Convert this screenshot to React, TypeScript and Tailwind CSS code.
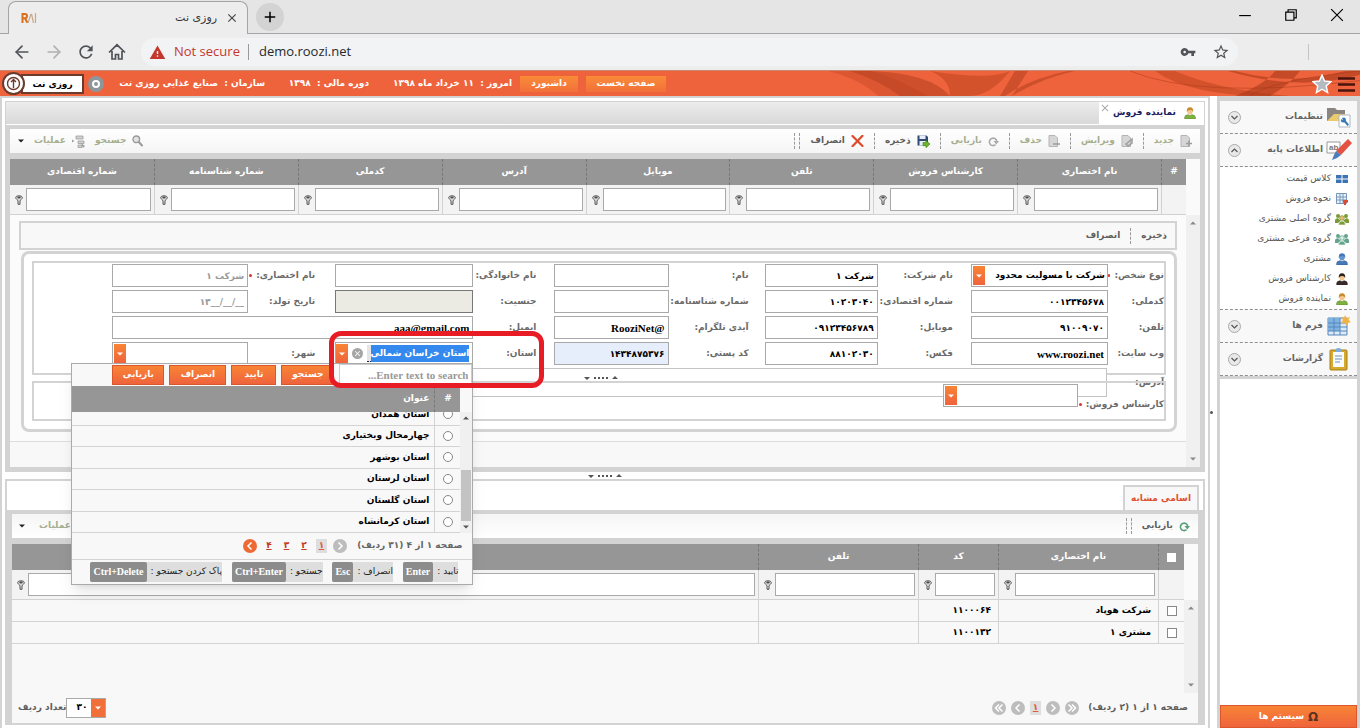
import type { ReactNode } from "react"
import clsx from "clsx"
import { LuArrowLeft, LuArrowRight } from "react-icons/lu"
import { MdRefresh, MdVpnKey, MdStarBorder, MdWarning, MdClose, MdAdd } from "react-icons/md"

const gridColumns = ["نام اختصاری", "کارشناس فروش", "تلفن", "موبایل", "آدرس", "کدملی", "شماره شناسنامه", "شماره اقتصادی"]

const provinces = ["استان همدان", "چهارمحال وبختیاری", "استان بوشهر", "استان لرستان", "استان گلستان", "استان کرمانشاه"]

const similarRows = [
  { name: "شرکت هوپاد", code: "۱۱۰۰۰۶۴" },
  { name: "مشتری ۱", code: "۱۱۰۰۱۳۲" },
]

const shortcuts = [
  { label: "تایید :", keys: "Enter" },
  { label: "انصراف :", keys: "Esc" },
  { label: "جستجو :", keys: "Ctrl+Enter" },
  { label: "پاک کردن جستجو :", keys: "Ctrl+Delete" },
]

/* ---------- small icons ---------- */

function Person({ hair = "#c98b2b", face = "#f3c88f", coat = "#7fb23c", size = 12 }: { hair?: string; face?: string; coat?: string; size?: number }) {
  return (
    <svg width={size} height={size} viewBox="0 0 12 12" className="shrink-0">
      <path d="M.5 12V10.500Q.5 8 4 7.500L6 8.500L8 7.500Q11.500 8 11.500 10.500V12Z" fill={coat} stroke="#00000055" strokeWidth=".5" />
      <ellipse cx="6" cy="4.300" rx="2.700" ry="3.200" fill={face} />
      <path d="M2.800 5Q2.300 .2 6 .2T9.200 5Q8.500 2.800 6 2.900T2.800 5Z" fill={hair} />
    </svg>
  )
}

function Group({ color, face }: { color: string; face: string }) {
  return (
    <svg width="14" height="12" viewBox="0 0 14 12" className="shrink-0">
      <circle cx="3" cy="3" r="2" fill={color} />
      <circle cx="11" cy="3" r="2" fill={color} />
      <path d="M0 8Q0 5 3 5.200L6 8L3 10H0ZM14 8Q14 5 11 5.200L8 8L11 10H14Z" fill={color} />
      <circle cx="7" cy="5" r="2.300" fill={face} stroke={color} strokeWidth=".8" />
      <path d="M3.500 12Q3.500 8 7 8T10.500 12Z" fill={color} stroke="#fff" strokeWidth=".6" />
    </svg>
  )
}

function PageIcon({ mark }: { mark: string }) {
  return (
    <svg width="12" height="12" viewBox="0 0 12 12" className="shrink-0">
      <path d="M1 .5H7L9.500 3V11.500H1Z" fill="#d6d6d6" stroke="#b5b5b5" />
      <path d={mark} fill="none" stroke="#9d9d9d" strokeWidth="1.500" />
    </svg>
  )
}

function ReloadIcon({ color }: { color: string }) {
  return (
    <svg width="11" height="11" viewBox="0 0 11 11" className="shrink-0">
      <path d="M7.500 8.700A3.700 3.700 0 1 1 8.700 5" fill="none" stroke={color} strokeWidth="1.600" />
      <path d="M5.500 5H11L8.300 8.500Z" fill={color} />
    </svg>
  )
}

function SaveIcon() {
  return (
    <svg width="13" height="13" viewBox="0 0 13 13" className="shrink-0">
      <path d="M.5 .5H9.500L11 2V10.500H.5Z" fill="#2f4a75" />
      <path d="M2.500 .5H8.500V4H2.500ZM2.500 6H9V10.500H2.500Z" fill="#e8eef7" />
      <path d="M6 7.500H9V5.500L13 9L9 12.800V10.700H6Z" fill="#6fb52c" stroke="#3d7a12" strokeWidth=".6" />
    </svg>
  )
}

function CancelIcon() {
  return (
    <svg width="13" height="12" viewBox="0 0 13 12" className="shrink-0">
      <path d="M1.500 1L11.500 11M11.500 .8L1.500 11.200" stroke="#dd4a2c" strokeWidth="2.200" strokeLinecap="round" />
    </svg>
  )
}

function SearchIcon() {
  return (
    <svg width="11" height="12" viewBox="0 0 11 12" className="shrink-0">
      <circle cx="4.300" cy="4.300" r="3.300" fill="#e2e2e2" stroke="#9a9a9a" strokeWidth="1.400" />
      <path d="M6.800 7L10 10.500" stroke="#9a9a9a" strokeWidth="2" strokeLinecap="round" />
    </svg>
  )
}

function ActionsIcon() {
  return (
    <svg width="13" height="13" viewBox="0 0 13 13" className="shrink-0">
      <path d="M4 1H11V4H4ZM6 6H12V8.500H6ZM6 10H10V12.500H6Z" fill="#d0d0d0" stroke="#a0a0a0" strokeWidth=".8" />
      <path d="M0 4.500L2.500 6L0 7.500ZM9 8L13 11L11 13Z" fill="#a0a0a0" />
    </svg>
  )
}

function FilterIcon() {
  return (
    <svg width="8" height="10" viewBox="0 0 8 10" className="shrink-0">
      <path d="M.7 2.600C.7 .2 7.300 .2 7.300 2.600C7.300 4.200 5 5 5 6V9.300H3V6C3 5 .7 4.200 .7 2.600Z" fill="#d9d9d9" stroke="#4a4a4a" strokeWidth=".9" />
      <ellipse cx="4" cy="2.500" rx="1.700" ry=".9" fill="#4a4a4a" />
    </svg>
  )
}

function Caret({ className }: { className?: string }) {
  return (
    <svg width="6" height="4" viewBox="0 0 6 4" className={className}>
      <path d="M0 .5H6L3 3.500Z" fill="currentColor" />
    </svg>
  )
}

function Grip() {
  return (
    <svg width="34" height="4" viewBox="0 0 34 4" className="text-[#555]">
      <path d="M0 1H6L3 4ZM28 3H34L31 0Z" fill="currentColor" />
      <path d="M10 2H24" stroke="currentColor" strokeWidth="2" strokeDasharray="2 2" />
    </svg>
  )
}

function Round({ d, orange, label }: { d: string; orange?: boolean; label: string }) {
  return (
    <button type="button" aria-label={label} className={clsx("flex size-[14px] items-center justify-center rounded-full", orange ? "bg-[#ee6a35]" : "bg-[#bdbdbd]")}>
      <svg width="10" height="10" viewBox="0 0 10 10">
        <path d={d} fill="none" stroke="#fff" strokeWidth="1.500" />
      </svg>
    </button>
  )
}

/* ---------- browser chrome ---------- */

function BrowserBar() {
  return (
    <header dir="ltr">
      <div className="flex h-[34px] items-end border-b border-[#a3a3a8] bg-[#e5e5e5]">
        <div className="relative ml-2 flex h-[33px] w-60 translate-y-px items-center rounded-t-lg border border-b-0 border-[#a3a3a8] bg-[#ededed] pr-2 pl-3 font-['DejaVu_Sans',sans-serif]">
          <svg width="16" height="10" viewBox="0 0 16 10">
            <path d="M1.500 10V1H4Q6 1 6 3T4 5.300H1.500M4 5.300L6.500 10" fill="none" stroke="#d9701e" strokeWidth="2" />
            <path d="M7 10L10 1M10.500 1L12.500 10M14.500 0V10" fill="none" stroke="#c9a88a" strokeWidth="1.200" />
          </svg>
          <span dir="rtl" className="flex-1 pr-2 text-[11px] text-[#333]">روزی نت</span>
          <button type="button" aria-label="Close tab"><MdClose size={14} className="text-[#444]" /></button>
        </div>
        <button type="button" aria-label="New tab" className="ml-2 flex size-7 items-center justify-center self-center rounded-full bg-[#d3d3d3]">
          <MdAdd size={18} />
        </button>
        <div className="mb-1 ml-auto flex items-center gap-8 self-center pr-4">
          <svg width="14" height="14" viewBox="0 0 12 12"><path d="M1 6.500H11" stroke="#000" /></svg>
          <svg width="14" height="14" viewBox="0 0 12 12" fill="none" stroke="#000"><path d="M1.500 3.500H8.500V10.500H1.500ZM3.500 3V1.500H10.500V8.500H9" /></svg>
          <svg width="14" height="14" viewBox="0 0 12 12"><path d="M1 1L11 11M11 1L1 11" stroke="#000" /></svg>
        </div>
      </div>
      <div className="flex h-9 items-center bg-[#ededed] pl-3 text-[#505357]">
        <div className="flex w-[129px] items-center gap-3">
          <LuArrowLeft size={20} />
          <LuArrowRight size={20} className="text-[#b0b0b0]" />
          <MdRefresh size={20} />
          <svg width="18" height="18" viewBox="0 0 18 18" fill="none" stroke="currentColor" strokeWidth="1.700"><path d="M1 9.500L9 1.800L17 9.500M4 8V16H7.500V11.500H10.500V16H14V8" /></svg>
        </div>
        <div className="flex h-7 flex-1 items-center rounded-full bg-[#f1f3f5] pr-2 pl-2 font-['Open_Sans',sans-serif] text-[13px]">
          <MdWarning size={17} className="text-[#c5372c]" />
          <span className="mr-2 ml-2 text-[#c5372c]">Not secure</span>
          <span className="mr-2.5 h-4 w-px bg-[#9a9a9a]" />
          <span className="text-[#26282c]">demo.roozi.net</span>
          <MdVpnKey size={16} className="mr-4 ml-auto" />
          <MdStarBorder size={18} />
        </div>
        <div className="mr-[51px] ml-[70px] h-4 w-px bg-[#c4c4c4]" />
      </div>
    </header>
  )
}

function TopBar() {
  return (
    <div dir="ltr" className="relative flex h-[26px] items-center border-t border-[#c98872] bg-[#ef633c] text-[9px] font-bold text-white">
      <svg className="absolute top-0 right-0 h-full w-[560px]" viewBox="0 0 560 26" preserveAspectRatio="none">
        <path d="M28 0Q60 8 78 26H128Q90 4 70 0Z" fill="#c94a27" opacity=".5" />
        <path d="M70 0Q130 2 150 26H100Q80 10 50 0ZM215 0H228L212 26H200ZM268 0Q230 8 205 26H212Q240 8 275 0Z" fill="#b8431f" opacity=".6" />
        <path d="M130 0Q190 10 210 0Q190 26 170 26H150Q150 8 130 0ZM355 0Q390 26 470 26H490Q420 20 375 0Z" fill="#c04722" opacity=".6" />
        <path d="M435 0Q490 16 545 0H560V4Q500 22 428 0ZM475 0Q465 14 435 26H470Q490 14 500 0Z" fill="#a83a1a" opacity=".6" />
        <path d="M330 0Q400 30 560 10M450 26Q470 10 560 0" fill="none" stroke="#a83a1a" opacity=".5" />
      </svg>
      <span className="z-10 ml-0.5 flex size-[23px] shrink-0 items-center justify-center rounded-full border-2 border-[#6b3b2d] bg-white">
        <svg width="15" height="15" viewBox="0 0 15 15" fill="none" stroke="#6b3b2d" strokeWidth="1.400"><circle cx="7.500" cy="7.500" r="6" /><path d="M7.500 12V4.500M5 6L7.500 3.500L10 6" /></svg>
      </span>
      <input aria-label="سیستم" dir="rtl" readOnly value="روزی نت" className="-ml-1 h-5 w-[63px] border-2 border-[#6b3b2d] bg-white text-center text-black" />
      <span className="mr-6 ml-1 flex size-4 shrink-0 items-center justify-center rounded-full bg-[#8d969b]"><span className="size-2 rounded-full border-2 border-white" /></span>
      <span dir="rtl" className="mr-6 w-[137px] whitespace-nowrap">سازمان :&nbsp; صنایع غذایی روزی نت</span>
      <span dir="rtl" className="mr-6 w-20 whitespace-nowrap">دوره مالی :&nbsp; ۱۳۹۸</span>
      <span dir="rtl" className="mr-2 w-[119px] whitespace-nowrap">امروز :&nbsp; ۱۱ خرداد ماه ۱۳۹۸</span>
      <button type="button" className="mr-2 h-4 w-[58px] bg-linear-to-b from-[#f98b38] to-[#f2703a]">داشبورد</button>
      <button type="button" className="h-4 w-20 bg-linear-to-b from-[#f98b38] to-[#f2703a]">صفحه نخست</button>
      <svg width="20" height="20" viewBox="0 0 20 20" className="z-10 ml-auto"><path d="M10 1L12.600 7L19 7.600L14.200 12L15.600 18.500L10 15.200L4.400 18.500L5.800 12L1 7.600L7.400 7Z" fill="#b3bbc0" stroke="#fff" strokeWidth="1.400" /></svg>
      <svg width="17" height="16" viewBox="0 0 17 16" className="z-10 mr-[5px] ml-1.5"><path d="M0 2.500H17M0 8.500H17M0 14.500H17" stroke="#4a130b" strokeWidth="2.400" /></svg>
    </div>
  )
}

/* ---------- sidebar ---------- */

function SideHeader({ label, open, children }: { label: string; open?: boolean; children: ReactNode }) {
  return (
    <button type="button" className="flex h-[33px] w-full items-center border-b border-dashed border-[#8f8f8f] bg-[#f8f8f8] pr-1.5 pl-2 text-[9px] font-bold text-[#666]">
      <span className="flex w-6 justify-center">{children}</span>
      <span className="mr-1 flex-1 text-right">{label}</span>
      <span className="flex size-[13px] items-center justify-center rounded-full border border-[#aaa] bg-[#e9e9e9]">
        <svg width="7" height="5" viewBox="0 0 7 5" className={clsx(open && "rotate-180")}><path d="M.5 1L3.500 4L6.500 1" fill="none" stroke="#555" strokeWidth="1.200" /></svg>
      </span>
    </button>
  )
}

const menuItems = [
  { label: "کلاس قیمت", icon: <svg width="12" height="10" viewBox="0 0 12 10"><path d="M0 1H5.500V4.500H0ZM6.500 1H12V4.500H6.500ZM0 5.500H5.500V9H0ZM6.500 5.500H12V9H6.500Z" fill="#3c74b5" /></svg> },
  { label: "نحوه فروش", icon: <svg width="12" height="12" viewBox="0 0 12 12"><path d="M.5 .5H10.500V10.500H.5ZM.5 4H10.500M.5 7H10.500M4 .5V10.500M7 .5V10.500" fill="#eaf2fb" stroke="#7897b8" /><path d="M7 7H12V9.500H10V12H8V9.500H7Z" fill="#dc4a30" /></svg> },
  { label: "گروه اصلی مشتری", icon: <Group color="#799b35" face="#efb979" /> },
  { label: "گروه فرعی مشتری", icon: <Group color="#64a38c" face="#d9efe6" /> },
  { label: "مشتری", icon: <Person hair="#4479ba" face="#6497cd" coat="#4479ba" /> },
  { label: "کارشناس فروش", icon: <Person hair="#33221c" coat="#3a2b2b" /> },
  { label: "نماینده فروش", icon: <Person /> },
]

function Sidebar() {
  return (
    <aside className="flex w-[143px] shrink-0 flex-col border-x-[3px] border-t-[5px] border-[#d3d3d3] bg-white">
      <SideHeader label="تنظیمات">
        <svg width="24" height="22" viewBox="0 0 24 22">
          <path d="M0 2H8L10 4H18V15H0Z" fill="#8a8580" />
          <path d="M0 15L7 8H18V15Z" fill="#eccb6a" />
          <path d="M12 9H23V21H12Z" fill="#fff" stroke="#aab8c6" />
          <path d="M15 12Q19 10 19 15L22 18.500L20.500 20L17.500 16.500Q13 17 14 13L16 14.500Z" fill="#3579b8" />
        </svg>
      </SideHeader>
      <SideHeader label="اطلاعات پایه" open>
        <svg width="26" height="22" viewBox="0 0 26 22" className="shrink-0">
          <path d="M1 3H14V14H1Z" fill="#fff" stroke="#999" />
          <text x="3" y="11" direction="ltr" fontSize="8" fill="#777" fontFamily="Liberation Sans">ab</text>
          <path d="M22 0L26 4L15 16L10 12Z" fill="#e25343" />
          <path d="M10 12L15 16L11 19L6 21L8 16Z" fill="#4c7cba" />
        </svg>
      </SideHeader>
      <ul className="border-b border-dashed border-[#8f8f8f] pt-0.5 pr-2 text-[9px] text-[#555]">
        {menuItems.map(({ label, icon }) => (
          <li key={label}>
            <a href="#" className="flex h-5 items-center gap-1">
              <span className="flex w-[14px] justify-center">{icon}</span>
              {label}
            </a>
          </li>
        ))}
      </ul>
      <SideHeader label="فرم ها">
        <svg width="24" height="22" viewBox="0 0 24 22">
          <path d="M1 3H20V20H1Z" fill="#dce9f7" stroke="#5688bb" />
          <path d="M1 3H13V16H1Z" fill="#80b3e1" />
          <path d="M1 8H20M1 12H20M1 16H20M7 3V20M13 3V20" stroke="#5688bb" />
          <path d="M18 0L19.500 3L23 2L21.500 5L24 7L21 8L20 11L18 8L14 8.500L16 5L14 2L17 3Z" fill="#f1b246" />
        </svg>
      </SideHeader>
      <SideHeader label="گزارشات">
        <svg width="20" height="24" viewBox="0 0 20 24">
          <rect x="1" y="3" width="17" height="20" rx="1" fill="#d6a92f" stroke="#a77e18" />
          <path d="M4 5H15V20H4Z" fill="#fafcff" />
          <path d="M6 5Q6 1 9.500 1T13 5Z" fill="#80aed8" />
          <path d="M6 9H13M6 12H13M6 15H11" stroke="#6b93bb" />
        </svg>
      </SideHeader>
      <div className="h-[3px] bg-[#d3d3d3]" />
      <button type="button" className="mt-auto flex h-[23px] items-center justify-center gap-1 border border-[#dc562c] bg-linear-to-b from-[#f88434] to-[#ef633c] text-[9px] font-bold text-white">
        <span className="text-xs text-[#5c3321]">Ω</span>
        سیستم ها
      </button>
    </aside>
  )
}

/* ---------- toolbar pieces ---------- */

function ToolButton({ icon, label, muted }: { icon?: ReactNode; label: string; muted?: boolean }) {
  return (
    <button type="button" className={clsx("flex items-center gap-1.5 text-[9px] font-bold", muted ? "text-[#a5af8f]" : "text-[#5e5e5e]")}>
      {icon}
      {label}
    </button>
  )
}

function Sep() {
  return <span className="h-4 w-px border-r border-dashed border-[#999]" />
}

function FilterInput({ label }: { label: string }) {
  return (
    <div className="flex h-[29px] items-center gap-[3px] pr-[3px] pl-[5px]">
      <input aria-label={label} className="h-[23px] w-full min-w-0 border border-[#a9a9a9] bg-white px-1" />
      <FilterIcon />
    </div>
  )
}

const headCell = "h-[26px] border-l border-dashed border-[#777] text-center text-[9px] font-bold text-white last:border-l-0"
const filterCell = "border-b border-l border-[#d2d2d2] bg-[#f3f3f3] p-0 last:border-l-0"

/* ---------- form ---------- */

function Field({ label, value = "", required, latin, className, wide, id }: {
  label: string; value?: string; required?: boolean; latin?: boolean; className?: string; wide?: boolean; id: string
}) {
  return (
    <>
      <FieldLabel id={id} label={label} required={required} />
      <input
        id={id}
        defaultValue={value}
        className={clsx(
          "h-[23px] w-full min-w-0 border px-[3px] font-bold",
          latin ? "font-['Liberation_Serif',serif] text-[11px]" : "text-[9px]",
          wide && "col-span-4",
          className ?? "border-[#a9a9a9] bg-white text-black",
        )}
      />
    </>
  )
}

function FieldLabel({ id, label, required }: { id: string; label: string; required?: boolean }) {
  return (
    <label htmlFor={id} className="flex min-w-0 items-center gap-1 self-center text-[9px] font-bold whitespace-nowrap text-[#6b6b6b]">
      {label}
      {required && <span className="size-[3px] rounded-full bg-[#d33]" />}
    </label>
  )
}

function DropDown({ id, value, className }: { id: string; value?: string; className?: string }) {
  return (
    <div className={clsx("flex h-[23px] min-w-0 border border-[#a9a9a9] bg-white", className)}>
      <select id={id} className="min-w-0 flex-1 appearance-none px-0.5 text-[9px] font-bold text-black">
        <option>{value}</option>
      </select>
      <span className="m-px flex w-3 shrink-0 items-center justify-center bg-linear-to-b from-[#f88434] to-[#ef633c] text-white"><Caret /></span>
    </div>
  )
}

const popupButton = "h-5 border border-[#dc562c] bg-linear-to-b from-[#f88434] to-[#ef633c]"

function ProvincePopup() {
  return (
    <div className="absolute top-[21px] right-0 z-20 w-[402px] border border-[#aaa] bg-[#f8f8f8] text-[9px] shadow-lg">
      <div className="flex h-[22px] items-center bg-[#f8f8f8] font-bold text-white">
        <input aria-label="جستجوی استان" placeholder="Enter text to search..." className="ml-[5px] h-[22px] w-[133px] border border-[#ccc] bg-white px-[3px] font-['Liberation_Serif',serif] text-[11px] font-bold placeholder:text-[#999]" />
        <button type="button" className={clsx(popupButton, "ml-[5px] w-[53px]")}>جستجو</button>
        <button type="button" className={clsx(popupButton, "ml-[5px] w-[45px]")}>تایید</button>
        <button type="button" className={clsx(popupButton, "ml-[5px] w-[57px]")}>انصراف</button>
        <button type="button" className={clsx(popupButton, "w-[52px]")}>بازیابی</button>
      </div>
      <div className="flex">
        <div className="w-3 shrink-0" />
        <div className="flex h-[26px] flex-1 items-center bg-[#969696] font-bold text-white">
          <span className="flex h-full w-[26px] items-center justify-center border-l border-dashed border-[#777]">#</span>
          <span className="pr-[5px]">عنوان</span>
        </div>
      </div>
      <div className="flex h-[121px] overflow-hidden">
        <div className="flex w-3 shrink-0 flex-col items-center bg-[#f0f0f0] py-1 text-[#555]">
          <Caret className="rotate-180" />
          <span className="mt-auto mb-1 h-[51px] w-[10px] bg-[#c3c3c3]" />
          <Caret />
        </div>
        <div className="flex flex-1 flex-col justify-end">
          <ul className="flex h-[129px] shrink-0 flex-col">
            {provinces.map((name) => (
              <li key={name} className="flex-1 border-b border-[#d3d3d3]">
                <label className="flex h-full items-center">
                  <span className="flex h-full w-[26px] items-center justify-center border-l border-[#d3d3d3]">
                    <input type="radio" name="province" className="size-[10px] appearance-none rounded-full border border-[#888] bg-white" />
                  </span>
                  <span className="pr-[5px] font-bold text-black">{name}</span>
                </label>
              </li>
            ))}
          </ul>
        </div>
      </div>
      <div className="flex h-[27px] items-center gap-1.5 border-b border-[#d3d3d3] pr-2.5 font-bold text-[#666]">
        <span className="ml-1">صفحه ۱ از ۴ (۳۱ ردیف)</span>
        <Round label="صفحه قبل" d="M3.500 1.500L7 5L3.500 8.500" />
        <span className="bg-[#dedede] px-[3px] text-[#e05a3a] underline">۱</span>
        <a href="#" className="px-[3px] text-[#c13c22] underline">۲</a>
        <a href="#" className="px-[3px] text-[#c13c22] underline">۳</a>
        <a href="#" className="px-[3px] text-[#c13c22] underline">۴</a>
        <Round label="صفحه بعد" orange d="M6.500 1.500L3 5L6.500 8.500" />
      </div>
      <div className="flex h-6 items-center justify-between pr-[14px] pl-[18px]">
        {shortcuts.map(({ label, keys }) => (
          <span key={keys} className="flex items-center bg-[#dedede] whitespace-nowrap text-[#222]">
            {label}
            <kbd className="mr-1 rounded-xs bg-[#8c8c8c] px-[3px] py-[3px] font-['Liberation_Serif',serif] text-[10px] leading-[14px] font-bold text-white">{keys}</kbd>
          </span>
        ))}
      </div>
    </div>
  )
}

function ProvinceField() {
  return (
    <>
      <FieldLabel id="province" label="استان:" />
      <div className="relative h-[23px] min-w-0">
        <div className="flex h-full border border-[#a9a9a9] bg-white pr-[3px]">
          <input id="province" defaultValue="استان خراسان شمالی" className="my-0.5 w-[98px] min-w-0 shrink-0 bg-[#3389ee] text-[9px] font-bold text-white" />
          <span className="my-0.5 w-1 border-b border-dotted border-[#224] bg-[#e5e5e5]" />
          <span className="mr-auto ml-1 flex size-[11px] shrink-0 items-center justify-center self-center rounded-full bg-[#a5a5a5]"><MdClose size={9} className="text-white" /></span>
          <span className="my-px flex w-3 shrink-0 items-center justify-center bg-linear-to-b from-[#f88434] to-[#ef633c] text-white"><Caret /></span>
        </div>
        <ProvincePopup />
        {/* callout drawn round the province search */}
        <div className="pointer-events-none absolute -top-[11px] -right-[71px] z-30 h-[57px] w-[215px] rounded-xl border-[5px] border-[#e81c24]" />
      </div>
    </>
  )
}

function CustomerForm() {
  return (
    <form className="flex-1 bg-[#fbfbfb] px-[9px] pt-1.5">
      <div className="mb-px flex h-[29px] items-center gap-2.5 border-2 border-[#d3d3d3] bg-[#f8f8f8] pr-2">
        <ToolButton label="ذخیره" />
        <Sep />
        <ToolButton label="انصراف" />
      </div>
      <div className="ml-0.5 rounded-lg border-[3px] border-[#d3d3d3] bg-white px-2 pt-[7px] pb-2">
        <fieldset className="relative h-[114px] border-2 border-[#d3d3d3] pt-px">
          <div className="grid grid-cols-[56fr_137fr_18fr_75fr_113fr_16fr_80fr_114fr_18fr_63fr_138fr_20fr_67fr_136fr_78fr] gap-y-[3px]">
            <FieldLabel id="kind" label="نوع شخص:" required />
            <DropDown id="kind" value="شرکت با مسولیت محدود" />
            <span />
            <Field id="company" label="نام شرکت:" value="شرکت ۱" />
            <span />
            <Field id="first" label="نام:" />
            <span />
            <Field id="last" label="نام خانوادگی:" />
            <span />
            <Field id="short" label="نام اختصاری:" required value="شرکت ۱" className="border-[#a9a9a9] bg-white text-[#999]" />
            <span />

            <Field id="national" label="کدملی:" value="۰۰۱۲۳۴۵۶۷۸" />
            <span />
            <Field id="economic" label="شماره اقتصادی:" value="۱۰۲۰۳۰۴۰" />
            <span />
            <Field id="idno" label="شماره شناسنامه:" />
            <span />
            <Field id="gender" label="جنسیت:" className="border-[#777] bg-[#ebebe4]" />
            <span />
            <Field id="birth" label="تاریخ تولد:" value="__/__/__۱۳" className="border-[#a9a9a9] bg-white leading-5 text-[#999]" />
            <span />

            <Field id="phone" label="تلفن:" value="۹۱۰۰۹۰۷۰" />
            <span />
            <Field id="mobile" label="موبایل:" value="۰۹۱۲۳۴۵۶۷۸۹" />
            <span />
            <Field id="telegram" label="آیدی تلگرام:" value="@RooziNet" latin />
            <span />
            <Field id="email" label="ایمیل:" value="aaa@gmail.com" latin wide />
            <span />

            <Field id="site" label="وب سایت:" value="www.roozi.net" latin />
            <span />
            <Field id="fax" label="فکس:" value="۸۸۱۰۲۰۳۰" />
            <span />
            <Field id="postal" label="کد پستی:" value="۱۴۳۴۸۷۵۳۷۶" className="border-[#a9a9a9] bg-[#e6eefc] text-black" />
            <span />
            <ProvinceField />
            <span />
            <FieldLabel id="city" label="شهر:" />
            <DropDown id="city" />
            <span />
          </div>
          {/* the address box runs past the fieldset's lower edge */}
          <textarea id="address" className="absolute top-[105px] right-[57px] left-[78px] h-[29px] resize-none border border-[#c4c4c4] bg-white" />
          <label htmlFor="address" className="absolute top-[113px] right-0 text-[9px] font-bold text-[#6b6b6b]">آدرس:</label>
          <span className="absolute top-[113px] left-[550px]"><Grip /></span>
        </fieldset>
        {/* sits over the address box, under the popup */}
        <fieldset className="relative mt-1.5 flex h-10 border-2 border-[#d3d3d3] pt-px">
          <span className="flex w-[86px] items-start pt-1.5">
            <FieldLabel id="expert" label="کارشناس فروش:" required />
          </span>
          <DropDown id="expert" className="w-[135px]" />
        </fieldset>
      </div>
    </form>
  )
}

function MainPanel() {
  return (
    <section className="flex h-[371px] flex-col border border-[#d3d3d3] bg-[#d3d3d3]">
      <div className="flex h-[23px] border-b border-white bg-linear-to-b from-[#ececec] to-[#d9d9d9]">
        <div className="flex w-[105px] items-center bg-white pr-2 text-[9px] font-bold text-[#21215f]">
          <Person />
          <span className="mr-2 flex-1 whitespace-nowrap">نماینده فروش</span>
          <button type="button" aria-label="بستن" className="self-start"><MdClose size={12} className="text-[#aaa]" /></button>
        </div>
      </div>
      <div className="flex flex-1 flex-col px-1 pt-1 pb-1">
        <div className="mb-1.5 flex h-6 items-center gap-2.5 bg-linear-to-b from-white to-[#f5f5f5] px-2">
          <ToolButton muted label="جدید" icon={<PageIcon mark="M6 8.500H12M9 5.500V11.500" />} />
          <Sep />
          <ToolButton muted label="ویرایش" icon={<PageIcon mark="M5 9L11 4V8L7 11Z" />} />
          <Sep />
          <ToolButton muted label="حذف" icon={<PageIcon mark="M5 9H12" />} />
          <Sep />
          <ToolButton muted label="بازیابی" icon={<ReloadIcon color="#aaa" />} />
          <Sep />
          <ToolButton label="ذخیره" icon={<SaveIcon />} />
          <Sep />
          <ToolButton label="انصراف" icon={<CancelIcon />} />
          <span className="flex gap-1"><Sep /><Sep /></span>
          <span className="flex-1" />
          <ToolButton muted label="جستجو" icon={<SearchIcon />} />
          <ToolButton muted label="عملیات" icon={<ActionsIcon />} />
          <Caret className="text-[#222]" />
        </div>
        <div className="flex flex-1 bg-white">
          <ScrollTrack />
          <div className="flex min-w-0 flex-1 flex-col">
            <table className="w-full table-fixed border-separate border-spacing-0">
              <thead>
                <tr className="bg-[#969696]">
                  <th className={clsx(headCell, "w-[25px]")}>#</th>
                  {gridColumns.map((c) => <th key={c} className={headCell}>{c}</th>)}
                </tr>
              </thead>
              <tbody>
                <tr>
                  <td className={filterCell} />
                  {gridColumns.map((c) => <td key={c} className={filterCell}><FilterInput label={c} /></td>)}
                </tr>
              </tbody>
            </table>
            <CustomerForm />
            <div className="h-[26px] border-t border-[#dedede] bg-[#f8f8f8]" />
          </div>
        </div>
      </div>
    </section>
  )
}

function ScrollTrack() {
  return (
    <div className="flex w-[14px] shrink-0 flex-col bg-[#fafafa] pt-[56px] text-[#888]">
      <div className="flex w-full flex-1 flex-col items-center justify-between bg-[#f0f0f0] py-1.5">
        <Caret className="rotate-180" />
        <Caret />
      </div>
    </div>
  )
}

function SimilarNames() {
  return (
    <section className="mb-[3px] flex flex-1 flex-col border-2 border-[#d3d3d3] bg-white">
      <div className="flex h-[29px] items-end pr-1">
        <button type="button" className="h-[25px] w-[76px] border-2 border-b-0 border-[#d3d3d3] bg-[#f8f8f8] text-[9px] font-bold text-[#df5335]">اسامی مشابه</button>
      </div>
      <div className="flex flex-1 flex-col bg-[#d3d3d3] px-[5px] pt-1">
        <div className="mb-1.5 flex h-6 items-center gap-2.5 bg-linear-to-b from-[#f5f5f5] to-white pr-2 pl-[7px]">
          <ToolButton label="بازیابی" icon={<ReloadIcon color="#5a9f7c" />} />
          <span className="flex gap-1"><Sep /><Sep /></span>
          <span className="flex-1" />
          <ToolButton muted label="عملیات" icon={<ActionsIcon />} />
          <Caret className="mr-1 text-[#222]" />
        </div>
        <div className="flex flex-1 flex-col bg-[#f8f8f8]">
          <div className="flex flex-1">
            <ScrollTrack />
            <div className="min-w-0 flex-1">
              <table className="w-full table-fixed border-separate border-spacing-0 text-[9px]">
                <thead>
                  <tr className="bg-[#969696]">
                    <th className={clsx(headCell, "w-[26px]")}>
                      <input type="checkbox" aria-label="انتخاب همه" className="mx-auto block size-[9px] appearance-none bg-white" />
                    </th>
                    <th className={clsx(headCell, "w-40")}>نام اختصاری</th>
                    <th className={clsx(headCell, "w-20")}>کد</th>
                    <th className={clsx(headCell, "w-40")}>تلفن</th>
                    <th className={headCell} />
                  </tr>
                </thead>
                <tbody>
                  <tr>
                    <td className={filterCell} />
                    {["نام اختصاری", "کد", "تلفن", "آدرس"].map((c) => <td key={c} className={filterCell}><FilterInput label={c} /></td>)}
                  </tr>
                  {similarRows.map(({ name, code }) => (
                    <tr key={code} className="font-bold text-black">
                      <td className="h-[22px] border-b border-l border-[#d3d3d3]">
                        <input type="checkbox" aria-label={name} className="mx-auto block size-[10px] appearance-none border border-[#888] bg-white" />
                      </td>
                      <td className="border-b border-l border-[#d3d3d3] pr-[7px]">{name}</td>
                      <td className="border-b border-l border-[#d3d3d3] pr-[7px]">{code}</td>
                      <td className="border-b border-l border-[#d3d3d3]" />
                      <td className="border-b border-[#d3d3d3]" />
                    </tr>
                  ))}
                </tbody>
              </table>
            </div>
          </div>
          <div className="flex h-[30px] items-center gap-[5px] pr-2.5 pl-1.5 text-[9px] font-bold text-[#5e5e5e]">
            <span className="ml-1">صفحه ۱ از ۱ (۲ ردیف)</span>
            <Round label="اولین صفحه" d="M1.500 1.500L5 5L1.500 8.500M5 1.500L8.500 5L5 8.500" />
            <Round label="صفحه قبل" d="M3.500 1.500L7 5L3.500 8.500" />
            <span className="bg-[#dedede] px-[3px] text-[#e05a3a] underline">۱</span>
            <Round label="صفحه بعد" d="M6.500 1.500L3 5L6.500 8.500" />
            <Round label="آخرین صفحه" d="M5 1.500L1.500 5L5 8.500M8.500 1.500L5 5L8.500 8.500" />
            <span className="flex-1" />
            <span dir="ltr" className="flex items-center">
              <label htmlFor="page-size">تعداد ردیف</label>
              <span className="flex h-5 w-10 border border-[#a9a9a9] bg-white">
                <select id="page-size" className="min-w-0 flex-1 appearance-none px-1 text-right text-black"><option>۳۰</option></select>
                <span className="flex w-[14px] items-center justify-center bg-[#f1703a] text-white"><Caret /></span>
              </span>
            </span>
          </div>
        </div>
      </div>
    </section>
  )
}

export default function App() {
  return (
    <div className="flex min-h-screen flex-col bg-white">
      <BrowserBar />
      <div dir="rtl" className="flex flex-1 flex-col font-['DejaVu_Sans',sans-serif]">
        <TopBar />
        <div className="flex flex-1">
          <Sidebar />
          <div className="flex w-[7px] items-center justify-end bg-white"><span className="size-[3px] rounded-full bg-[#555]" /></div>
          <main className="flex min-w-0 flex-1 flex-col border-x-2 border-t-2 border-[#d3d3d3] px-[3px] pt-[3px]">
            <MainPanel />
            <div className="flex h-[7px] items-center justify-center"><Grip /></div>
            <SimilarNames />
          </main>
        </div>
      </div>
    </div>
  )
}
